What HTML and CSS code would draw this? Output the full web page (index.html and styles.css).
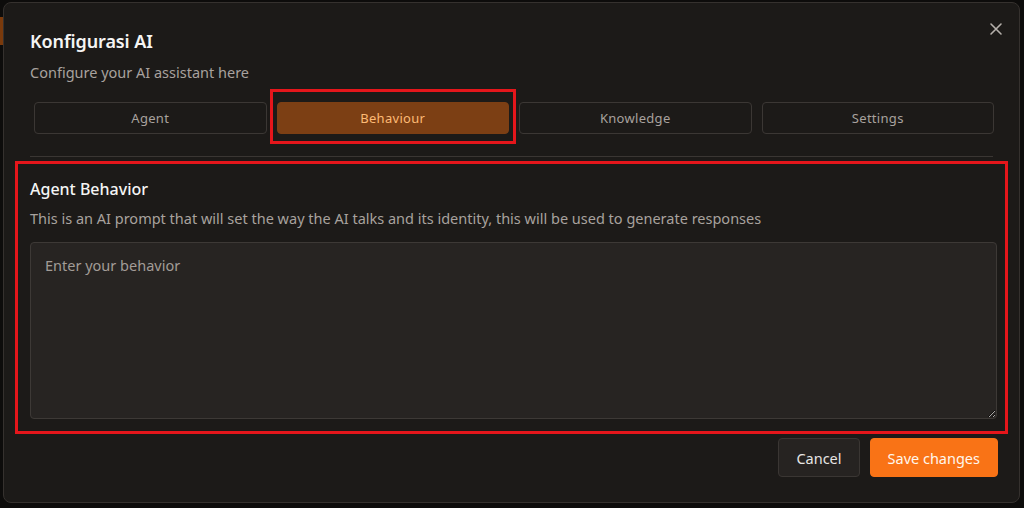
FILE: index.html
```html
<!DOCTYPE html>
<html lang="en">
<head>
  <meta charset="UTF-8">
  <meta name="viewport" content="width=device-width, initial-scale=1.0">
  <title>Konfigurasi AI</title>
  <link rel="stylesheet" href="styles.css">
</head>
<body>
  <div class="backdrop-tab"></div>

  <div class="dialog">
    <button class="close-btn" aria-label="Close">
      <svg width="14" height="14" viewBox="0 0 14 14" fill="none" stroke="currentColor" stroke-width="1.6" stroke-linecap="round">
        <path d="M2 2 L12 12 M12 2 L2 12"/>
      </svg>
    </button>

    <div class="dialog-header">
      <h2>Konfigurasi AI</h2>
      <p class="subtitle">Configure your AI assistant here</p>
    </div>

    <div class="tabs">
      <button class="tab">Agent</button>
      <button class="tab active">Behaviour</button>
      <button class="tab">Knowledge</button>
      <button class="tab">Settings</button>
    </div>

    <hr class="divider">

    <div class="section">
      <h3>Agent Behavior</h3>
      <p class="section-desc">This is an AI prompt that will set the way the AI talks and its identity, this will be used to generate responses</p>
      <textarea class="behavior-input" placeholder="Enter your behavior"></textarea>
    </div>

    <div class="footer">
      <button class="btn btn-cancel">Cancel</button>
      <button class="btn btn-save">Save changes</button>
    </div>

    <!-- annotation boxes -->
    <div class="mark mark-tab"></div>
    <div class="mark mark-section"></div>
  </div>
</body>
</html>
```

FILE: styles.css
```css
body {
  margin: 0;
  background-color: #0d0c0b;
  font-family: "Noto Sans", "Open Sans", Arial, sans-serif;
  color: #f5f5f4;
  height: 508px;
  overflow: hidden;
  position: relative;
}
.backdrop-tab {
  position: absolute;
  left: 0;
  top: 17px;
  width: 4px;
  height: 28px;
  background-color: #7a3a0c;
}
.dialog {
  position: relative;
  margin: 2px 0 0 3px;
  width: 1017px;
  height: 501px;
  box-sizing: border-box;
  background-color: #1c1a18;
  border: 1px solid #35312e;
  border-radius: 8px;
  padding: 24px 26px 0 26px;
}
.close-btn {
  position: absolute;
  top: 19px;
  right: 16px;
  background: none;
  border: none;
  padding: 0;
  color: #b5b0ab;
  cursor: pointer;
  display: flex;
}
.dialog-header h2 {
  margin: 0;
  font-size: 18px;
  font-weight: 600;
  line-height: 28px;
  letter-spacing: -0.1px;
  color: #f5f5f4;
}
.subtitle {
  margin: 7px 0 0 0;
  font-size: 14.5px;
  line-height: 20px;
  color: #a8a29e;
}
.tabs {
  display: grid;
  grid-template-columns: repeat(4, 1fr);
  gap: 10px;
  margin: 20px -1px 0 4px;
}
.tab {
  height: 32px;
  background-color: transparent;
  border: 1px solid #3b3734;
  border-radius: 4px;
  color: #a8a29e;
  font-family: inherit;
  font-size: 13px;
  letter-spacing: 0.3px;
  cursor: pointer;
}
.tab.active {
  background-color: #7c3f14;
  border-color: #7c3f14;
  color: #fdba74;
}
.divider {
  border: none;
  border-top: 1px solid #3a3633;
  margin: 22px 0 0 0;
}
.section {
  margin-top: 20px;
}
.section h3 {
  margin: 0;
  font-size: 16px;
  font-weight: 500;
  line-height: 24px;
  color: #f5f5f4;
}
.section-desc {
  margin: 7px 0 0 0;
  font-size: 14.5px;
  line-height: 20px;
  color: #a8a29e;
}
.behavior-input {
  display: block;
  box-sizing: border-box;
  width: 967px;
  height: 177px;
  margin-top: 14px;
  padding: 12px 14px;
  background-color: #272422;
  border: 1px solid #3d3936;
  border-radius: 4px;
  color: #e7e5e4;
  font-family: inherit;
  font-size: 14.5px;
  resize: vertical;
  outline: none;
}
.behavior-input::placeholder {
  color: #a29c97;
}
.footer {
  display: flex;
  justify-content: flex-end;
  gap: 10px;
  margin: 19px -5px 0 0;
}
.btn {
  height: 39px;
  padding: 0 17px;
  border-radius: 4px;
  font-family: inherit;
  font-size: 14.5px;
  cursor: pointer;
}
.btn-cancel {
  background-color: #262321;
  border: 1px solid #3a3633;
  color: #e7e5e4;
}
.btn-save {
  background-color: #f97316;
  border: 1px solid #f97316;
  color: #fff7ed;
}
.mark {
  position: absolute;
  border: 3px solid #e5161b;
  pointer-events: none;
}
.mark-tab {
  left: 266px;
  top: 86px;
  width: 240px;
  height: 49px;
}
.mark-section {
  left: 11px;
  top: 158px;
  width: 987px;
  height: 267px;
}
```
